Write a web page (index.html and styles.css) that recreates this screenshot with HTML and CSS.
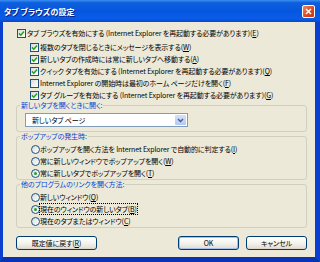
FILE: index.html
```html
<!DOCTYPE html>
<html lang="ja">
<head>
    <meta charset="UTF-8">
    <meta name="viewport" content="width=device-width, initial-scale=1.0">
    <title>タブ ブラウズの設定</title>
    <link rel="stylesheet" href="styles.css">
</head>
<body>
    <div class="window">
        <div class="titlebar">
            <span class="title">タブ ブラウズの設定</span>
            <span class="close">
                <svg width="7" height="7" viewBox="0 0 7 7"><path d="M1 1L6 6M6 1L1 6" stroke="#fff" stroke-width="1.5"/></svg>
            </span>
        </div>
        <div class="content">
            <div class="check">
                <span class="box"><svg width="7" height="7" viewBox="0 0 7 7"><path d="M1 3.4L2.8 5.2L6 1.6" stroke="#21a121" stroke-width="1.5" fill="none"/></svg></span>
                <span>タブ ブラウズを有効にする (Internet Explorer を再起動する必要があります)(<u>E</u>)</span>
            </div>
            <div class="sub">
                <div class="check">
                    <span class="box"><svg width="7" height="7" viewBox="0 0 7 7"><path d="M1 3.4L2.8 5.2L6 1.6" stroke="#21a121" stroke-width="1.5" fill="none"/></svg></span>
                    <span>複数のタブを閉じるときにメッセージを表示する(<u>W</u>)</span>
                </div>
                <div class="check">
                    <span class="box"><svg width="7" height="7" viewBox="0 0 7 7"><path d="M1 3.4L2.8 5.2L6 1.6" stroke="#21a121" stroke-width="1.5" fill="none"/></svg></span>
                    <span>新しいタブの作成時には常に新しいタブへ移動する(<u>A</u>)</span>
                </div>
                <div class="check">
                    <span class="box"><svg width="7" height="7" viewBox="0 0 7 7"><path d="M1 3.4L2.8 5.2L6 1.6" stroke="#21a121" stroke-width="1.5" fill="none"/></svg></span>
                    <span>クイック タブを有効にする (Internet Explorer を再起動する必要があります)(<u>Q</u>)</span>
                </div>
                <div class="check">
                    <span class="box"></span>
                    <span>Internet Explorer の開始時は最初のホーム ページだけを開く(<u>F</u>)</span>
                </div>
                <div class="check">
                    <span class="box"><svg width="7" height="7" viewBox="0 0 7 7"><path d="M1 3.4L2.8 5.2L6 1.6" stroke="#21a121" stroke-width="1.5" fill="none"/></svg></span>
                    <span>タブ グループを有効にする (Internet Explorer を再起動する必要があります)(<u>G</u>)</span>
                </div>
            </div>

            <fieldset class="group">
                <legend>新しいタブを開くときに開く:</legend>
                <div class="select">
                    <span class="value">新しいタブ ページ</span>
                    <span class="arrow"><svg width="7" height="5" viewBox="0 0 7 5"><path d="M1 1L3.5 3.5L6 1" stroke="#4d6185" stroke-width="1.5" fill="none"/></svg></span>
                </div>
            </fieldset>

            <fieldset class="group">
                <legend>ポップアップの発生時:</legend>
                <div class="radio"><span class="dot"></span><span>ポップアップを開く方法を Internet Explorer で自動的に判定する(<u>I</u>)</span></div>
                <div class="radio"><span class="dot"></span><span>常に新しいウィンドウでポップアップを開く(<u>W</u>)</span></div>
                <div class="radio"><span class="dot on"></span><span>常に新しいタブでポップアップを開く(<u>T</u>)</span></div>
            </fieldset>

            <fieldset class="group">
                <legend>他のプログラムのリンクを開く方法:</legend>
                <div class="radio"><span class="dot"></span><span>新しいウィンドウ(<u>Q</u>)</span></div>
                <div class="radio"><span class="dot on"></span><span class="focus">現在のウィンドウの新しいタブ(<u>B</u>)</span></div>
                <div class="radio"><span class="dot"></span><span>現在のタブまたはウィンドウ(<u>C</u>)</span></div>
            </fieldset>

            <div class="buttons">
                <button class="btn reset">既定値に戻す(<u>R</u>)</button>
                <button class="btn ok">OK</button>
                <button class="btn">キャンセル</button>
            </div>
        </div>
    </div>
</body>
</html>
```

FILE: styles.css
```css
* {
    box-sizing: border-box;
}
body {
    margin: 0;
    font-family: "Noto Sans CJK JP", sans-serif;
    font-size: 7px;
    font-feature-settings: "palt";
    letter-spacing: -0.1px;
    color: #000;
}
.window {
    width: 320px;
    height: 262px;
    display: flex;
    flex-direction: column;
    background-color: #0b3fcf;
}
.titlebar {
    height: 22px;
    display: flex;
    align-items: center;
    justify-content: space-between;
    padding: 0 5px 0 4px;
    background: linear-gradient(to bottom, #3d8ef5 0%, #0f60dc 12%, #0556e0 50%, #0a5ce8 85%, #0848c8 100%);
}
.title {
    color: #fff;
    font-weight: bold;
    font-size: 8px;
    letter-spacing: 0;
    text-shadow: 1px 1px 0 #0a1f7a;
}
.close {
    width: 13px;
    height: 13px;
    border: 1px solid #fff;
    border-radius: 2px;
    background: linear-gradient(135deg, #f08a66, #d9451d 60%, #c23a16);
    display: flex;
    align-items: center;
    justify-content: center;
}
.content {
    flex: 1;
    display: flex;
    flex-direction: column;
    background-color: #ece9d8;
    border-left: 3px solid #0b3fcf;
    border-right: 5px solid #0b3fcf;
    border-bottom: 5px solid #0a33b4;
    padding: 5px 8px 0 13px;
}
.check, .radio {
    display: flex;
    align-items: center;
    height: 12px;
    white-space: nowrap;
}
.box {
    width: 9px;
    height: 9px;
    border: 1px solid #1c5180;
    background: linear-gradient(135deg, #dcdcd5, #fff);
    margin: 0 1px 0 1px;
    display: flex;
    align-items: center;
    justify-content: center;
    flex-shrink: 0;
}
.sub {
    margin-top: 2px;
    padding-left: 13px;
}
.group {
    margin: 0;
    border: 1px solid #d0d0bf;
    border-radius: 3px;
    padding: 0 0 0 3px;
}
.group legend {
    padding: 0 1px;
    line-height: 9px;
    color: #0046d5;
}
.select {
    margin: 3px 0 4px 5px;
    width: 163px;
    height: 14px;
    border: 1px solid #7f9db9;
    background-color: #fff;
    display: flex;
    align-items: center;
    justify-content: space-between;
    padding: 1px 1px 1px 6px;
}
.arrow {
    width: 11px;
    height: 100%;
    border-radius: 1px;
    background: linear-gradient(to bottom, #d5e1fb, #b3c8f5);
    display: flex;
    align-items: center;
    justify-content: center;
}
.radio:first-of-type {
    margin-top: 2px;
}
.dot {
    width: 9px;
    height: 9px;
    border: 1px solid #1c5180;
    border-radius: 50%;
    background: linear-gradient(135deg, #dcdcd5, #fff);
    margin-left: 11px;
    display: flex;
    align-items: center;
    justify-content: center;
    flex-shrink: 0;
}
.dot.on::after {
    content: "";
    width: 3px;
    height: 3px;
    border-radius: 50%;
    background-color: #21a121;
}
.focus {
    outline: 1px dotted #000;
}
.buttons {
    display: flex;
    margin-top: 8px;
    gap: 7px;
}
.btn {
    height: 14px;
    width: 61px;
    padding: 0;
    font: inherit;
    letter-spacing: inherit;
    color: #000;
    border: 1px solid #003c74;
    border-radius: 3px;
    background: linear-gradient(to bottom, #fff 0%, #f4f3ee 50%, #e3e0d6 90%, #d6d0c5 100%);
}
.btn.reset {
    width: 81px;
    margin-right: auto;
}
.btn.ok {
    box-shadow: inset 0 0 0 1px #a8c0ee;
}
```
